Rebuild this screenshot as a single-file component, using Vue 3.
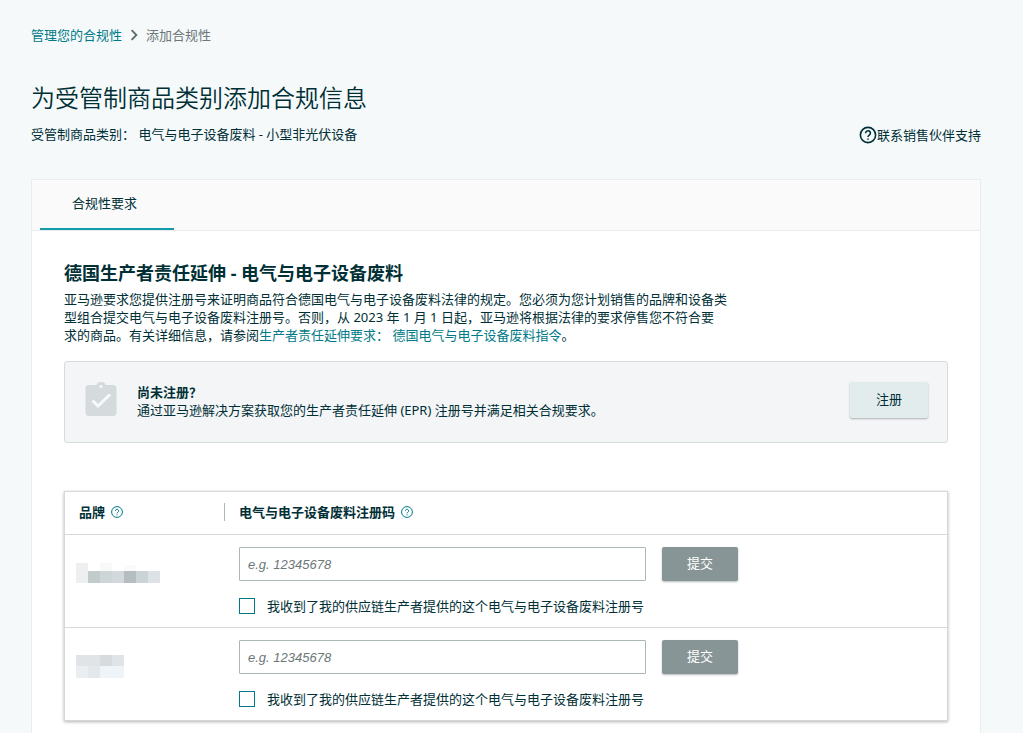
<script setup>
import { ref } from 'vue'

const rows = ref([
  {
    id: 'brand-1',
    code: '',
    fromSupplier: false,
    mask: {
      width: 84,
      height: 20,
      cells: [
        [0, 0, 12, 20, '#eeeff0'],
        [24, 0, 12, 8, '#f8f9f9'],
        [48, 2, 12, 6, '#fafafa'],
        [12, 8, 12, 12, '#c1cbca'],
        [24, 8, 12, 12, '#cdd5d7'],
        [36, 8, 12, 12, '#d2d8db'],
        [48, 8, 12, 12, '#b5bdc0'],
        [60, 8, 12, 12, '#cad3d5'],
        [72, 8, 12, 12, '#dce2e5']
      ]
    }
  },
  {
    id: 'brand-2',
    code: '',
    fromSupplier: false,
    mask: {
      width: 48,
      height: 23,
      cells: [
        [0, 0, 24, 11, '#e0e4e6'],
        [24, 0, 12, 11, '#d7dbdd'],
        [36, 0, 12, 11, '#dee4e8'],
        [0, 11, 12, 12, '#ebeef0'],
        [12, 11, 12, 12, '#e4e8ea'],
        [24, 11, 24, 12, '#eef4f8']
      ]
    }
  }
])
</script>

<template>
  <div class="page">
    <nav class="crumbs" aria-label="breadcrumb">
      <a href="#">管理您的合规性</a>
      <svg class="chevron" viewBox="0 0 8 10" aria-hidden="true"><path d="M2 1l4 4-4 4" /></svg>
      <span>添加合规性</span>
    </nav>

    <header class="head">
      <div>
        <h1>为受管制商品类别添加合规信息</h1>
        <p class="category">受管制商品类别： 电气与电子设备废料 - 小型非光伏设备</p>
      </div>
      <a class="support" href="#">
        <svg viewBox="0 0 18 18" aria-hidden="true">
          <circle cx="9" cy="9" r="7.6" />
          <path d="M6.6 7.2a2.4 2.4 0 1 1 3.7 2c-.9.6-1.3 1-1.3 1.9M9 12.4v1.4" />
        </svg>
        <span>联系销售伙伴支持</span>
      </a>
    </header>

    <main class="panel">
      <div class="tabs" role="tablist">
        <button class="tab" type="button" role="tab" aria-selected="true">合规性要求</button>
      </div>

      <section class="content">
        <h2>德国生产者责任延伸 - 电气与电子设备废料</h2>
        <p class="intro">
          亚马逊要求您提供注册号来证明商品符合德国电气与电子设备废料法律的规定。您必须为您计划销售的品牌和设备类型组合提交电气与电子设备废料注册号。否则，从 2023 年 1 月 1 日起，亚马逊将根据法律的要求停售您不符合要<span class="keep">求的商品</span>。有关详细信息，请参阅<a href="#">生产者责任延伸要求： 德国电气与电子设备废料指令</a>。
        </p>

        <div class="notice">
          <svg class="clipboard" viewBox="0 0 32 34" aria-hidden="true">
            <path class="board" d="M4 3h7.3a5 5 0 0 1 9.4 0H28a3.500 3.500 0 0 1 3.500 3.500v24A3.500 3.500 0 0 1 28 34H4a3.500 3.500 0 0 1-3.500-3.500v-24A3.500 3.500 0 0 1 4 3z" />
            <circle class="hole" cx="16" cy="4.500" r="1.700" />
            <path class="tick" d="M7.500 18.500l5.500 5.500L25 12.500" />
          </svg>
          <div class="notice-text">
            <strong>尚未注册？</strong>
            <p>通过亚马逊解决方案获取您的生产者责任延伸 (EPR) 注册号并满足相关合规要求。</p>
          </div>
          <button class="btn register" type="button">注册</button>
        </div>

        <table class="codes">
          <thead>
            <tr>
              <th class="brand-col" scope="col">
                <span class="th-in divided">品牌
                  <svg class="help" viewBox="0 0 12 12" aria-hidden="true">
                    <circle cx="6" cy="6" r="5.400" />
                    <path d="M4.400 4.900a1.600 1.600 0 1 1 2.500 1.300c-.6.4-.9.600-.9 1.200M6 8.300v1" />
                  </svg>
                </span>
              </th>
              <th scope="col">
                <span class="th-in">电气与电子设备废料注册码
                  <svg class="help" viewBox="0 0 12 12" aria-hidden="true">
                    <circle cx="6" cy="6" r="5.400" />
                    <path d="M4.400 4.900a1.600 1.600 0 1 1 2.500 1.300c-.6.4-.9.600-.9 1.200M6 8.300v1" />
                  </svg>
                </span>
              </th>
            </tr>
          </thead>
          <tbody>
            <tr v-for="row in rows" :key="row.id">
              <td class="brand">
                <svg :width="row.mask.width" :height="row.mask.height" aria-hidden="true">
                  <rect
                    v-for="(c, i) in row.mask.cells"
                    :key="i"
                    :x="c[0]"
                    :y="c[1]"
                    :width="c[2]"
                    :height="c[3]"
                    :fill="c[4]"
                  />
                </svg>
              </td>
              <td class="entry">
                <form class="line" @submit.prevent>
                  <input
                    v-model="row.code"
                    class="code"
                    type="text"
                    placeholder="e.g. 12345678"
                    aria-label="电气与电子设备废料注册码"
                  />
                  <button class="btn submit" type="submit">提交</button>
                </form>
                <label class="check">
                  <input v-model="row.fromSupplier" type="checkbox" />
                  <span>我收到了我的供应链生产者提供的这个电气与电子设备废料注册号</span>
                </label>
              </td>
            </tr>
          </tbody>
        </table>
      </section>
    </main>
  </div>
</template>

<style>
body {
  margin: 0;
  background: #f5f9fa;
}
</style>

<style scoped>
.page {
  box-sizing: border-box;
  min-height: 100vh;
  display: flex;
  flex-direction: column;
  padding: 26px 42px 0 31px;
  font-family: "Noto Sans", "Noto Sans CJK SC", sans-serif;
  font-size: 13px;
  line-height: 18px;
  color: #002f36;
}
h1, h2, p { margin: 0; }
a { color: #007a87; text-decoration: none; }
button, input { font: inherit; color: inherit; }

.crumbs { display: flex; align-items: center; gap: 7px; color: #6c7778; }
.chevron { width: 10px; height: 12px; fill: none; stroke: #5c6b6e; stroke-width: 1.500; }

.head { display: flex; justify-content: space-between; align-items: flex-end; margin-top: 38px; }
h1 { font-size: 24px; line-height: 32px; font-weight: 350; }
.category { margin-top: 11px; padding-bottom: 1px; }
.support { display: flex; align-items: center; color: #002f36; }
.support svg { width: 18px; height: 18px; fill: none; stroke: currentColor; stroke-width: 1.600; }

.panel {
  flex: 1;
  margin-top: 35px;
  background: #fff;
  border: 1px solid #e9eded;
  border-bottom: 0;
}
.tabs { display: flex; padding: 0 8px; background: #fafafa; border-bottom: 1px solid #e9eded; }
.tab {
  height: 50px;
  padding: 0 37px 2px 32px;
  border: 0;
  border-bottom: 2px solid #129aaa;
  background: none;
}

.content { padding: 31px 32px 11px; }
h2 { font-size: 18px; line-height: 22px; font-weight: 700; }
.intro { max-width: 664px; margin-top: 6px; }
.keep { white-space: nowrap; }

.notice {
  box-sizing: border-box;
  display: flex;
  align-items: center;
  min-height: 82px;
  margin-top: 17px;
  padding: 0 19px 0 20px;
  background: #f3f5f7;
  border: 1px solid #d5dbdb;
  border-radius: 3px;
}
.clipboard { width: 32px; height: 34px; margin-bottom: 6px; }
.board { fill: #d5dbdd; }
.hole { fill: #f3f5f7; }
.tick { fill: none; stroke: #f7f9fa; stroke-width: 3; }
.notice-text { flex: 1; margin-left: 20px; padding-bottom: 2px; }
.notice-text strong { display: block; }

.btn { padding: 0 0 2px; border: 0; border-radius: 2px; box-shadow: 0 1px 2px rgba(0, 20, 25, 0.3); }
.register { width: 78px; height: 36px; margin-bottom: 4px; background: #e3eced; }
.submit { width: 76px; height: 34px; background: #879596; color: #fff; }

.codes {
  width: 100%;
  margin-top: 48px;
  border: 1px solid #d5d9d9;
  border-spacing: 0;
  box-shadow: 0 1px 3px rgba(0, 0, 0, 0.3);
  table-layout: fixed;
}
th { height: 40px; padding: 0 0 2px; border-bottom: 1px solid #d5d9d9; text-align: left; }
.brand-col { width: 160px; }
.th-in { display: flex; align-items: center; gap: 6px; padding-left: 14px; }
.divided { border-right: 1px solid #aab7b8; }
.help { width: 12px; height: 12px; fill: none; stroke: #007a87; stroke-width: 1; }
td { padding: 0; }
tr + tr td { border-top: 1px solid #d5d9d9; }
.brand { padding-left: 11px; vertical-align: middle; }
.brand svg { display: block; margin-bottom: 16px; }
.entry { padding: 12px 14px; }
.line { display: flex; gap: 16px; }
.code {
  box-sizing: border-box;
  width: 407px;
  height: 34px;
  padding: 0 8px;
  border: 1px solid #aab7b8;
  border-radius: 1px;
  background: #fff;
  font-family: "Liberation Sans", Arial, sans-serif;
}
.code::placeholder { color: #6c7778; font-style: italic; opacity: 1; }
.check { display: flex; align-items: center; gap: 12px; margin-top: 16px; }
.check input {
  appearance: none;
  width: 16px;
  height: 16px;
  margin: 0;
  border: 1px solid #007a87;
  background: #fff;
}
.check input:checked { background: #007a87; }
</style>
